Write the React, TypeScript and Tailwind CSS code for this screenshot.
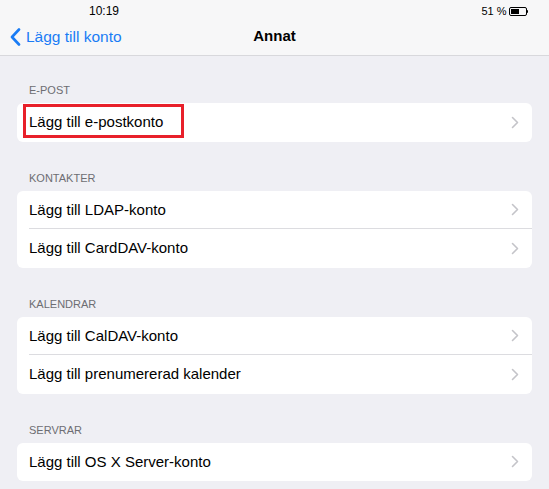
import { ReactNode } from 'react'

const font = { fontFamily: '"Liberation Sans", Arial, sans-serif' }

function Chevron() {
  return (
    <svg width="8" height="13" viewBox="0 0 8 13" className="shrink-0">
      <path d="M1.5 1.5 L6.5 6.5 L1.5 11.5" fill="none" stroke="#c4c4c9" strokeWidth="1.6" strokeLinecap="round" strokeLinejoin="round" />
    </svg>
  )
}

function Row({ label, last, highlight }: { label: string; last?: boolean; highlight?: boolean }) {
  return (
    <div className="relative flex h-[38.5px] items-center pl-3">
      <div className="flex h-full flex-1 items-center justify-between pr-[13px]">
        <span className="text-[15px] text-black">{label}</span>
        <Chevron />
      </div>
      {!last && <div className="absolute bottom-0 left-3 right-0 h-px bg-[#dcdce0]" />}
      {highlight && (
        <div className="absolute left-[6px] top-[1px] h-[34px] w-[161px] border-[3px] border-[#e8202a]" />
      )}
    </div>
  )
}

function Section({ title, children, first }: { title: string; children: ReactNode; first?: boolean }) {
  return (
    <div className={first ? '' : 'mt-[29px]'}>
      <div className="px-[29px] pb-[6px] text-[11px] uppercase leading-[14px] text-[#6d6d72]">{title}</div>
      <div className="mx-[17px] overflow-hidden rounded-[6px] bg-white">{children}</div>
    </div>
  )
}

export default function App() {
  return (
    <div className="h-[489px] w-[549px] overflow-hidden bg-[#efeff4]" style={font}>
      <div className="border-b border-[#d8d8dc] bg-[#f7f7f8]">
        <div className="relative h-[18px] text-[12px] text-black">
          <span className="absolute left-[89px] top-[2px]">10:19</span>
          <div className="absolute right-[21px] top-[3px] flex items-center gap-[2px]">
            <span className="text-[11px]">51 %</span>
            <div className="flex items-center">
              <div className="h-[9px] w-[18px] rounded-[2px] border border-black p-[1px]">
                <div className="h-full w-[8px] bg-black" />
              </div>
              <div className="h-[3px] w-[1.5px] rounded-r bg-black" />
            </div>
          </div>
        </div>
        <div className="relative flex h-[37px] items-center">
          <div className="flex items-center gap-[5px] pl-[10px] text-[#1a7cf5]">
            <svg width="11" height="18" viewBox="0 0 11 18">
              <path d="M9 1.5 L2 9 L9 16.5" fill="none" stroke="#1a7cf5" strokeWidth="2.6" strokeLinecap="round" strokeLinejoin="round" />
            </svg>
            <span className="text-[15.5px]">Lägg till konto</span>
          </div>
          <span className="absolute left-1/2 -translate-x-1/2 text-[15px] font-bold text-black">Annat</span>
        </div>
      </div>

      <div className="pt-[27px]">
        <Section title="E-post" first>
          <Row label="Lägg till e-postkonto" last highlight />
        </Section>
        <Section title="Kontakter">
          <Row label="Lägg till LDAP-konto" />
          <Row label="Lägg till CardDAV-konto" last />
        </Section>
        <Section title="Kalendrar">
          <Row label="Lägg till CalDAV-konto" />
          <Row label="Lägg till prenumererad kalender" last />
        </Section>
        <Section title="Servrar">
          <Row label="Lägg till OS X Server-konto" last />
        </Section>
      </div>
    </div>
  )
}
